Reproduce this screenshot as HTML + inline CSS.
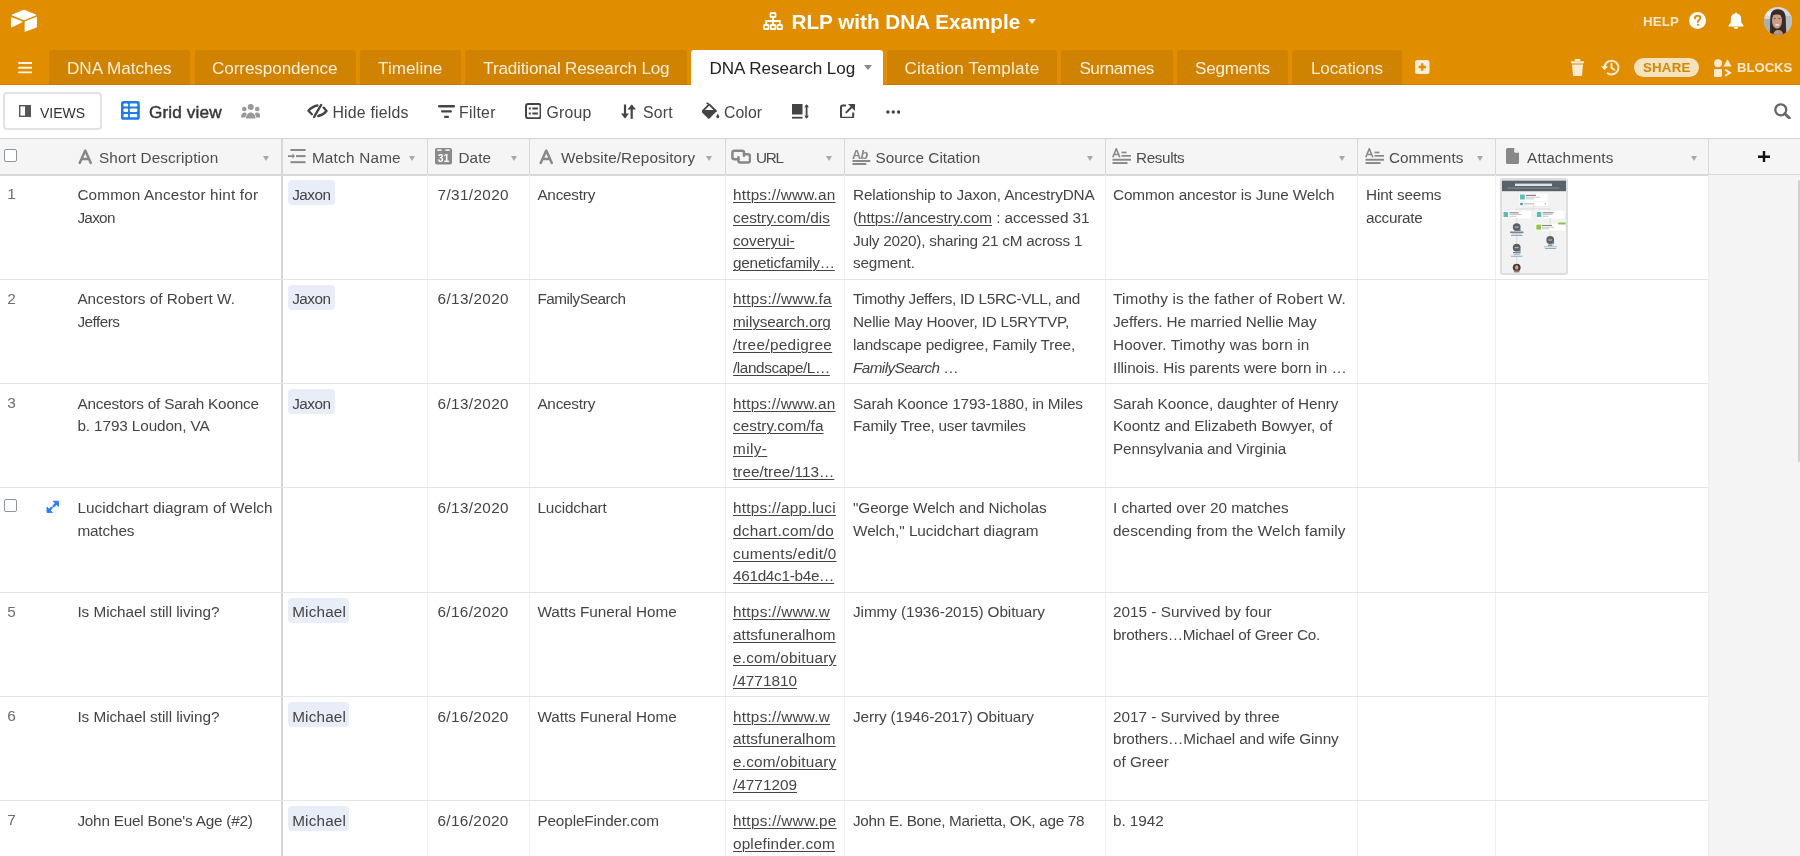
<!DOCTYPE html><html><head><meta charset="utf-8"><style>
*{box-sizing:border-box}
html,body{margin:0;padding:0}
#root{position:absolute;left:0;top:0;width:1800px;height:856px;will-change:transform}
body{width:1800px;height:856px;overflow:hidden;position:relative;font-family:"Liberation Sans",sans-serif;background:#fff;color:#333}
.a{position:absolute}
.c{position:absolute;font-size:15.30px;line-height:22.85px;white-space:nowrap;color:#444}
.c u{text-decoration:underline;text-underline-offset:1.5px;text-decoration-thickness:1px}
.url{text-decoration:underline;text-underline-offset:1.5px;text-decoration-thickness:1px}
.tab{position:absolute;top:49.5px;height:35.5px;background:rgba(0,0,0,0.07);border-radius:3px 3px 0 0;color:rgba(255,255,255,0.86);font-size:17.1px;line-height:37px;white-space:nowrap;text-indent:0}
.tb{position:absolute;font-size:15.8px;line-height:20px;color:#444;white-space:nowrap}
.hd{position:absolute;top:148px;font-size:15.3px;line-height:20px;color:#444;white-space:nowrap}
.caret{position:absolute;top:155.6px;width:0;height:0;border-left:3.85px solid transparent;border-right:3.85px solid transparent;border-top:5.1px solid #a8a8a8}
.vl{position:absolute;top:175px;width:1px;height:681px;background:#efefef}
.vh{position:absolute;top:138px;width:1px;height:37px;background:#d5dadd}
.hl{position:absolute;left:0;width:1708px;height:1px;background:#e3e6e8}
.pill{position:absolute;height:25px;background:#e8edf8;border-radius:4px;font-size:15.3px;line-height:25px;color:#333;padding:0 4.5px;white-space:nowrap}
.num{position:absolute;font-size:15.4px;line-height:20px;color:#6e6e6e}
</style></head><body><div id="root">
<div class="a" style="left:0;top:0;width:1800px;height:85px;background:#e08d00"></div><div class="a" style="left:0;top:84px;width:1800px;height:1px;background:#d98000"></div>
<svg style="position:absolute;left:11px;top:10px" width="26" height="22" viewBox="0 0 26 22"><path d="M11.5 0.3 L1.2 4.4 C0.6 4.6 0.6 5.4 1.2 5.6 L11.6 9.7 C12.5 10.1 13.5 10.1 14.4 9.7 L24.8 5.6 C25.4 5.4 25.4 4.6 24.8 4.4 L14.5 0.3 C13.5 -0.1 12.5 -0.1 11.5 0.3Z" fill="#fff"/><path d="M13.6 11.9 V21.3 C13.6 21.7 14 22 14.4 21.8 L25.4 17.5 C25.7 17.4 25.9 17.1 25.9 16.8 V7.4 C25.9 7 25.5 6.7 25.1 6.9 L14.1 11.2 C13.8 11.3 13.6 11.6 13.6 11.9Z" fill="#fff"/><path d="M11 12.4 L7.8 14 L0.9 17.3 C0.5 17.5 0 17.2 0 16.8 V7.6 C0 7.3 0.4 7 0.8 7.2 L10.9 11.2 C11.3 11.4 11.4 12.2 11 12.4Z" fill="#fff"/></svg>
<svg class="a" style="left:763px;top:12px" width="20" height="18" viewBox="0 0 20 18"><g fill="none" stroke="#fff" stroke-width="1.8"><rect x="7.5" y="1" width="5" height="4" rx="0.6"/><rect x="1" y="13" width="4.5" height="4" rx="0.6"/><rect x="7.7" y="13" width="4.6" height="4" rx="0.6"/><rect x="14.5" y="13" width="4.5" height="4" rx="0.6"/><path d="M10 5v8M3.2 13V9h13.6v4"/></g></svg>
<div class="a" style="left:791.5px;top:8px;font-size:20.7px;line-height:28px;font-weight:bold;color:#fff;white-space:nowrap">RLP with DNA Example</div>
<div class="a" style="left:1027.5px;top:19px;width:0;height:0;border-left:4px solid transparent;border-right:4px solid transparent;border-top:5.5px solid rgba(255,255,255,0.85)"></div>
<div class="a" style="left:1643px;top:12px;font-size:13.3px;line-height:20px;font-weight:bold;letter-spacing:0.1px;color:rgba(255,255,255,0.8)">HELP</div>
<svg class="a" style="left:1689px;top:12px" width="17" height="17" viewBox="0 0 17 17"><circle cx="8.5" cy="8.5" r="8.5" fill="#fff"/><path d="M5.9 6.4c0-1.6 1.2-2.6 2.7-2.6 1.6 0 2.7 1 2.7 2.3 0 1.9-2.4 2-2.4 3.9" fill="none" stroke="#e08d00" stroke-width="1.9" stroke-linecap="round"/><circle cx="8.9" cy="12.8" r="1.1" fill="#e08d00"/></svg>
<svg class="a" style="left:1728px;top:12px" width="16" height="17" viewBox="0 0 16 17"><path d="M8 0.5c0.7 0 1 0.4 1 0.9 2.7 0.5 4.2 2.6 4.2 5.4v3.6l2.3 3.1v0.9H0.5v-0.9l2.3-3.1V6.8C2.8 4 4.3 1.9 7 1.4 7 0.9 7.3 0.5 8 0.5z" fill="#fff"/><path d="M5.8 15h4.4c0 1-1 1.8-2.2 1.8S5.8 16 5.8 15z" fill="#fff"/></svg>
<svg class="a" style="left:1764.2px;top:6.8px" width="28" height="28" viewBox="0 0 28 28"><defs><clipPath id="av"><circle cx="14" cy="14" r="14"/></clipPath></defs><g clip-path="url(#av)"><rect width="28" height="28" fill="#d3d9de"/><rect x="0" y="12" width="8" height="16" fill="#a9b0b5"/><rect x="21" y="9" width="7" height="19" fill="#b8bec2"/><rect x="1" y="4" width="6" height="5" fill="#e8ecef"/>
<path d="M5.8 28 L6.3 11 C6.6 4.5 9.5 2.3 13.8 2.3 C18.5 2.3 21.3 5 21.7 10.5 L22.3 28 Z" fill="#3a2b24"/><ellipse cx="13" cy="13.8" rx="5" ry="7.8" fill="#c99f8a"/><path d="M8 8.5 C9 5.5 11 4.8 13.5 4.8 C16.5 4.8 18 6.5 18.3 9 C16 7.2 11 7 8 8.5Z" fill="#3a2b24"/>
<ellipse cx="10.8" cy="11.6" rx="1.1" ry="0.6" fill="#6b4f44"/><ellipse cx="15.4" cy="11.6" rx="1.1" ry="0.6" fill="#6b4f44"/><ellipse cx="13.1" cy="17.8" rx="2.1" ry="0.9" fill="#eee3dd"/><path d="M9 28 C10 24 12 23 14 23 C16.5 23 18.5 24 19.5 28Z" fill="#b9968a"/></g></svg>
<svg class="a" style="left:17.5px;top:61.7px" width="14.5" height="12" viewBox="0 0 14.5 12"><g stroke="#fff" stroke-width="1.9" stroke-linecap="round" opacity="0.9"><path d="M1 1h12.5M1 5.7h12.5M1 10.4h12.5"/></g></svg>
<div class="tab" style="left:48.5px;width:141.5px"></div>
<div class="a" style="left:67.00px;top:49.5px;letter-spacing:0.000px;white-space:nowrap;font-size:17.1px;line-height:37px;color:rgba(255,255,255,0.86)">DNA Matches</div>
<div class="tab" style="left:194.5px;width:161.0px"></div>
<div class="a" style="left:212.00px;top:49.5px;letter-spacing:-0.077px;white-space:nowrap;font-size:17.1px;line-height:37px;color:rgba(255,255,255,0.86)">Correspondence</div>
<div class="tab" style="left:360px;width:100.7px"></div>
<div class="a" style="left:378.10px;top:49.5px;letter-spacing:0.029px;white-space:nowrap;font-size:17.1px;line-height:37px;color:rgba(255,255,255,0.86)">Timeline</div>
<div class="tab" style="left:465px;width:222.0px"></div>
<div class="a" style="left:483.25px;top:49.5px;letter-spacing:-0.174px;white-space:nowrap;font-size:17.1px;line-height:37px;color:rgba(255,255,255,0.86)">Traditional Research Log</div>
<div class="tab" style="left:887px;width:169.8px"></div>
<div class="a" style="left:904.40px;top:49.5px;letter-spacing:0.188px;white-space:nowrap;font-size:17.1px;line-height:37px;color:rgba(255,255,255,0.86)">Citation Template</div>
<div class="tab" style="left:1060.7px;width:112.3px"></div>
<div class="a" style="left:1079.40px;top:49.5px;letter-spacing:-0.429px;white-space:nowrap;font-size:17.1px;line-height:37px;color:rgba(255,255,255,0.86)">Surnames</div>
<div class="tab" style="left:1176.7px;width:111.7px"></div>
<div class="a" style="left:1195.00px;top:49.5px;letter-spacing:-0.257px;white-space:nowrap;font-size:17.1px;line-height:37px;color:rgba(255,255,255,0.86)">Segments</div>
<div class="tab" style="left:1292.4px;width:109.6px"></div>
<div class="a" style="left:1311.00px;top:49.5px;letter-spacing:-0.150px;white-space:nowrap;font-size:17.1px;line-height:37px;color:rgba(255,255,255,0.86)">Locations</div>
<div class="tab" style="left:691px;width:192px;background:#fff;color:#222"></div>
<div class="a" style="left:709.50px;top:49.5px;letter-spacing:-0.033px;white-space:nowrap;font-size:17.1px;line-height:37px;color:#222">DNA Research Log</div>
<div class="a" style="left:864px;top:64.5px;width:0;height:0;border-left:4px solid transparent;border-right:4px solid transparent;border-top:5px solid #888"></div>
<svg class="a" style="left:1415px;top:60px" width="14.5" height="14" viewBox="0 0 14.5 14"><rect width="14.5" height="14" rx="2.5" fill="rgba(255,255,255,0.85)"/><path d="M7.25 3.3v7.4M3.55 7h7.4" stroke="#e08d00" stroke-width="2.3"/></svg>
<svg class="a" style="left:1570.7px;top:58.8px" width="13" height="17" viewBox="0 0 13 17"><g fill="rgba(255,255,255,0.82)"><rect x="3.5" y="0" width="6" height="2" rx="0.8"/><rect x="0" y="2.2" width="13" height="2.2" rx="0.8"/><path d="M1 5.5h11l-0.9 10.2c-0.1 0.8-0.6 1.3-1.4 1.3H3.3c-0.8 0-1.3-0.5-1.4-1.3z"/></g></svg>
<svg class="a" style="left:1600.5px;top:58.8px" width="19" height="17" viewBox="0 0 19 17"><g fill="none" stroke="rgba(255,255,255,0.82)" stroke-width="2"><path d="M3.6 8.5A6.9 6.9 0 1 1 6 13.8"/><path d="M10.5 4.8v4l2.8 2" stroke-linecap="round"/></g><path d="M0 7.2h7.2L3.6 11.3z" fill="rgba(255,255,255,0.82)"/></svg>
<div class="a" style="left:1633.8px;top:57.9px;width:65.5px;height:19px;border-radius:10px;background:rgba(255,255,255,0.75);color:#d48700;font-size:13.3px;font-weight:bold;line-height:19px;text-align:center;letter-spacing:0.25px;padding-left:0.5px">SHARE</div>
<svg class="a" style="left:1714.4px;top:58.8px" width="18" height="18" viewBox="0 0 18 18"><g fill="rgba(255,255,255,0.82)"><circle cx="4" cy="4.2" r="4"/><path d="M13.5 0.3L17.6 7.6H9.4z"/><rect x="0" y="10" width="8" height="8" rx="1.2"/></g><path d="M11 10.7l5 3.1-5 3.1" fill="none" stroke="rgba(255,255,255,0.82)" stroke-width="2"/></svg>
<div class="a" style="left:1737px;top:58.2px;font-size:13.1px;line-height:20px;font-weight:bold;letter-spacing:0px;color:rgba(255,255,255,0.82)">BLOCKS</div>
<div class="a" style="left:3px;top:92.2px;width:99px;height:37.6px;border:2px solid #e3e3e3;border-radius:4px;background:#fff"></div>
<svg class="a" style="left:19px;top:105px" width="12" height="12" viewBox="0 0 12 12"><rect x="0.7" y="0.7" width="10.6" height="10.6" fill="none" stroke="#555" stroke-width="1.4"/><rect x="6" y="0.7" width="5.3" height="10.6" fill="#555"/></svg>
<div class="tb" style="left:40px;top:102.5px;font-size:14px;letter-spacing:0px;color:#333">VIEWS</div>
<svg class="a" style="left:121.25px;top:101.4px" width="18.8" height="18.8" viewBox="0 0 18.8 18.8"><rect x="0" y="0" width="18.8" height="18.8" rx="2.6" fill="#1f7be6"/><g fill="#fff"><rect x="2.5" y="2.5" width="4.6" height="3.1" rx="0.9"/><rect x="8.8" y="2.5" width="7.5" height="3.1" rx="0.9"/><rect x="2.5" y="7.6" width="4.6" height="3.4" rx="0.9"/><rect x="8.8" y="7.6" width="7.5" height="3.4" rx="0.9"/><rect x="2.5" y="13" width="4.6" height="3.3" rx="0.9"/><rect x="8.8" y="13" width="7.5" height="3.3" rx="0.9"/></g></svg>
<div class="a" style="left:149.00px;top:101.5px;letter-spacing:0.125px;white-space:nowrap;font-size:17.2px;line-height:20px;color:#383838;-webkit-text-stroke:0.45px #383838">Grid view</div>
<svg class="a" style="left:240.8px;top:103.8px" width="19.5" height="15" viewBox="0 0 19.5 15"><g fill="#999"><circle cx="9.75" cy="3" r="3"/><circle cx="3.3" cy="5" r="2.3"/><circle cx="16.2" cy="5" r="2.3"/><path d="M5 14.5c0-3.6 2-6 4.75-6s4.75 2.4 4.75 6z"/><path d="M0 13.5c0-2.8 1.3-5 3.3-5 1 0 1.8 0.5 2.4 1.3C5 10.8 4.5 12 4.4 13.5z"/><path d="M19.5 13.5c0-2.8-1.3-5-3.3-5-1 0-1.8 0.5-2.4 1.3 0.7 1 1.2 2.2 1.3 3.7z"/></g></svg>
<svg class="a" style="left:306px;top:103px" width="23" height="16" viewBox="0 0 23 16"><g fill="none" stroke="#444" stroke-width="2.3" stroke-linecap="round" stroke-linejoin="round"><path d="M11.4 2.5Q6.2 3.4 2.4 7.8L5.9 11.3"/><path d="M15.2 1.9L8.1 13.9"/><path d="M17.6 4.6L20.6 8Q17.4 12 12.2 13"/></g></svg>
<div class="a" style="left:332.40px;top:103px;letter-spacing:0.180px;white-space:nowrap;font-size:15.9px;line-height:20px;color:#444">Hide fields</div>
<svg class="a" style="left:437.5px;top:104.7px" width="17" height="13.5" viewBox="0 0 17 13.5"><g fill="#444"><rect x="0" y="0" width="17" height="2.4" rx="1.2"/><rect x="3" y="5.3" width="11" height="2.3" rx="1.1"/><rect x="6" y="10.8" width="5" height="2.4" rx="1.2"/></g></svg>
<div class="a" style="left:459.10px;top:103px;letter-spacing:0.240px;white-space:nowrap;font-size:15.8px;line-height:20px;color:#444">Filter</div>
<svg class="a" style="left:524.7px;top:103px" width="16.6" height="16.3" viewBox="0 0 16.6 16.3"><rect x="1" y="1" width="14.6" height="14.3" rx="2.2" fill="none" stroke="#444" stroke-width="2"/><g fill="#444"><rect x="3.8" y="4.5" width="2" height="2"/><rect x="7.3" y="4.5" width="5.6" height="2"/><rect x="3.8" y="9.5" width="2" height="2"/><rect x="7.3" y="9.5" width="5.6" height="2"/></g></svg>
<div class="a" style="left:546.50px;top:103px;letter-spacing:0.250px;white-space:nowrap;font-size:15.8px;line-height:20px;color:#444">Group</div>
<svg class="a" style="left:621.3px;top:103.5px" width="14.5" height="15" viewBox="0 0 14.5 15"><g fill="none" stroke="#444" stroke-width="2.2"><path d="M4 0.5v13"/><path d="M10.7 1.5v13.3"/></g><g fill="#444"><path d="M0 9.5h8l-4 5z"/><path d="M6.5 5.5h8.5l-4.25-5z"/></g></svg>
<div class="a" style="left:642.90px;top:103px;letter-spacing:0.267px;white-space:nowrap;font-size:15.8px;line-height:20px;color:#444">Sort</div>
<svg class="a" style="left:701px;top:102px" width="18.5" height="17" viewBox="0 0 18.5 17"><path d="M8.2 2.4L1.3 9.3c-0.4 0.4-0.4 1 0 1.4l5.8 5.8c0.4 0.4 1 0.4 1.4 0l6.9-6.9z" fill="#444"/><path d="M8.2 2.4l7.2 7.2" stroke="#444" stroke-width="1.4"/><path d="M2.6 8h11.2L8.2 2.4z" fill="#fff"/><path d="M8.2 2.4L1.3 9.3M8.2 2.4l7.2 7.2" stroke="#444" stroke-width="1.8" fill="none"/><path d="M5.5 0.8l3 1.8" stroke="#444" stroke-width="1.5"/><path d="M16.8 11.8c0.9 1.3 1.5 2.2 1.5 3 0 0.8-0.7 1.4-1.5 1.4s-1.5-0.6-1.5-1.4c0-0.8 0.6-1.7 1.5-3z" fill="#444"/></svg>
<div class="a" style="left:723.90px;top:103px;letter-spacing:0.100px;white-space:nowrap;font-size:15.8px;line-height:20px;color:#444">Color</div>
<svg class="a" style="left:791.7px;top:103.7px" width="17.5" height="15" viewBox="0 0 17.5 15"><rect x="0" y="0" width="10.5" height="10.5" fill="#444"/><rect x="0" y="12.8" width="10.5" height="1.8" fill="#444"/><path d="M14.6 1.2v12.6" stroke="#444" stroke-width="1.8"/><path d="M12.2 3.3l2.4-3 2.4 3zM12.2 11.7l2.4 3 2.4-3z" fill="#444"/></svg>
<svg class="a" style="left:840.4px;top:103.7px" width="15" height="14.5" viewBox="0 0 15 14.5"><path d="M6 1.6H2.6C1.6 1.6 1 2.2 1 3.2v9c0 1 0.6 1.6 1.6 1.6h9c1 0 1.6-0.6 1.6-1.6V8.6" fill="none" stroke="#444" stroke-width="2"/><path d="M5.8 8.9L12.5 2.2" stroke="#444" stroke-width="2"/><path d="M8 0h7v7z" fill="#444"/></svg>
<svg class="a" style="left:885.6px;top:110px" width="14.5" height="4" viewBox="0 0 14.5 4"><g fill="#444"><circle cx="1.9" cy="2" r="1.7"/><circle cx="7.25" cy="2" r="1.7"/><circle cx="12.6" cy="2" r="1.7"/></g></svg>
<svg class="a" style="left:1774px;top:102.8px" width="17" height="16.5" viewBox="0 0 17 16.5"><circle cx="6.8" cy="6.8" r="5.5" fill="none" stroke="#666" stroke-width="2.3"/><path d="M10.8 10.8l4.6 4.3" stroke="#666" stroke-width="2.8" stroke-linecap="round"/></svg>
<div class="a" style="left:0;top:137.6px;width:1800px;height:38.2px;background:#f5f5f5;border-top:1.6px solid #d2d2d2;border-bottom:2px solid #d9d9d9"></div>
<div class="a" style="left:1708px;top:175px;width:92px;height:681px;background:#f4f4f4"></div>
<div class="a" style="left:1797.5px;top:180px;width:2.5px;height:282px;background:#cfcfcf;border-radius:2px"></div>
<div class="a" style="left:4px;top:149px;width:13px;height:13px;border:1.3px solid #8c959c;border-radius:2px;background:#fff"></div>
<div class="vl" style="left:426.5px"></div><div class="vh" style="left:426.5px"></div>
<div class="vl" style="left:529.0px"></div><div class="vh" style="left:529.0px"></div>
<div class="vl" style="left:724.5px"></div><div class="vh" style="left:724.5px"></div>
<div class="vl" style="left:844.0px"></div><div class="vh" style="left:844.0px"></div>
<div class="vl" style="left:1105.0px"></div><div class="vh" style="left:1105.0px"></div>
<div class="vl" style="left:1357.0px"></div><div class="vh" style="left:1357.0px"></div>
<div class="vl" style="left:1495.0px"></div><div class="vh" style="left:1495.0px"></div>
<div class="vl" style="left:1707.5px"></div><div class="vh" style="left:1707.5px"></div>
<div class="a" style="left:281px;top:138px;width:2px;height:718px;background:#d6d6d6"></div>
<div class="hl" style="top:278.83px"></div>
<div class="hl" style="top:383.16px"></div>
<div class="hl" style="top:487.49px"></div>
<div class="hl" style="top:591.82px"></div>
<div class="hl" style="top:696.15px"></div>
<div class="hl" style="top:800.48px"></div>
<div class="hl" style="top:904.81px"></div>
<svg class="a" style="left:78.2px;top:149px" width="14.5" height="15.5" viewBox="0 0 14.5 15.5"><path d="M1.7 13.9L7.25 1.6L12.8 13.9M4 9.9h6.5" fill="none" stroke="#888" stroke-width="2.5" stroke-linecap="round" stroke-linejoin="round"/></svg>
<div class="a" style="left:99.00px;top:148px;letter-spacing:0.113px;white-space:nowrap;font-size:15.3px;line-height:20px;color:#4d4d4d">Short Description</div>
<div class="caret" style="left:263px"></div>
<svg class="a" style="left:288.4px;top:149.4px" width="17.6" height="14.2" viewBox="0 0 17.6 14.2"><g fill="#888"><rect x="2.5" y="0" width="15.1" height="2"/><rect x="8" y="6.1" width="9.6" height="2"/><rect x="2.5" y="12.2" width="15.1" height="2"/><path d="M0 6.3h4.5V4.5l2.5 2.6-2.5 2.6V7.9H0z"/></g></svg>
<div class="a" style="left:311.90px;top:148px;letter-spacing:0.222px;white-space:nowrap;font-size:15.3px;line-height:20px;color:#4d4d4d">Match Name</div>
<div class="caret" style="left:409px"></div>
<svg class="a" style="left:435.3px;top:148.3px" width="17" height="16.6" viewBox="0 0 17 16.6"><rect x="0" y="0" width="17" height="16.6" rx="1.8" fill="#8a8a8a"/><rect x="2.3" y="1.3" width="4.3" height="1.6" fill="#f4f4f4"/><rect x="10.4" y="1.3" width="4.3" height="1.6" fill="#f4f4f4"/><text x="8.5" y="14.2" font-family="Liberation Sans" font-weight="bold" font-size="10.5" fill="#fff" text-anchor="middle">31</text></svg>
<div class="a" style="left:458.50px;top:148px;letter-spacing:0.067px;white-space:nowrap;font-size:15.3px;line-height:20px;color:#4d4d4d">Date</div>
<div class="caret" style="left:510.5px"></div>
<svg class="a" style="left:538.5px;top:149px" width="14.5" height="15.5" viewBox="0 0 14.5 15.5"><path d="M1.7 13.9L7.25 1.6L12.8 13.9M4 9.9h6.5" fill="none" stroke="#888" stroke-width="2.5" stroke-linecap="round" stroke-linejoin="round"/></svg>
<div class="a" style="left:561.10px;top:148px;letter-spacing:0.094px;white-space:nowrap;font-size:15.3px;line-height:20px;color:#4d4d4d">Website/Repository</div>
<div class="caret" style="left:706px"></div>
<svg class="a" style="left:730.5px;top:149px" width="20" height="14.5" viewBox="0 0 20 14.5"><g fill="none" stroke="#888" stroke-width="2.5" stroke-linecap="round" stroke-linejoin="round"><path d="M7.6 10.3H3.4Q1.4 10.3 1.4 8.3V3.8Q1.4 1.8 3.4 1.8H11Q13 1.8 13 3.8V6.8"/><path d="M13 5.3H17Q19 5.3 19 7.3V11.4Q19 13.4 17 13.4H9.4Q7.4 13.4 7.4 11.4V8.2"/></g></svg>
<div class="a" style="left:755.90px;top:148px;letter-spacing:-1.200px;white-space:nowrap;font-size:15.3px;line-height:20px;color:#4d4d4d">URL</div>
<div class="caret" style="left:826px"></div>
<svg class="a" style="left:851.5px;top:147.5px" width="19" height="17" viewBox="0 0 19 17"><text x="0" y="10.6" font-family="Liberation Sans" font-weight="bold" font-size="12.6" fill="#888">A</text><text x="8.6" y="10.6" font-family="Liberation Sans" font-weight="bold" font-style="italic" font-size="12.6" fill="#888">b</text><rect x="0.3" y="12" width="18.2" height="1.9" rx="0.9" fill="#888"/><rect x="0.3" y="15" width="14.2" height="1.9" rx="0.9" fill="#888"/></svg>
<div class="a" style="left:875.50px;top:148px;letter-spacing:0.014px;white-space:nowrap;font-size:15.3px;line-height:20px;color:#4d4d4d">Source Citation</div>
<div class="caret" style="left:1087px"></div>
<svg class="a" style="left:1112.4px;top:147.8px" width="19" height="16" viewBox="0 0 19 16"><path d="M0.8 9.2L4.3 0.8L7.8 9.2M2 6.5h4.6" fill="none" stroke="#888" stroke-width="1.6"/><g fill="#888"><rect x="9.5" y="3.6" width="5" height="1.7"/><rect x="9.5" y="7" width="9.5" height="1.7"/><rect x="0.5" y="10.8" width="18.5" height="1.9"/><rect x="0.5" y="14.1" width="15" height="1.9"/></g></svg>
<div class="a" style="left:1136.10px;top:148px;letter-spacing:-0.400px;white-space:nowrap;font-size:15.3px;line-height:20px;color:#4d4d4d">Results</div>
<div class="caret" style="left:1339.3px"></div>
<svg class="a" style="left:1364.8px;top:147.8px" width="19" height="16" viewBox="0 0 19 16"><path d="M0.8 9.2L4.3 0.8L7.8 9.2M2 6.5h4.6" fill="none" stroke="#888" stroke-width="1.6"/><g fill="#888"><rect x="9.5" y="3.6" width="5" height="1.7"/><rect x="9.5" y="7" width="9.5" height="1.7"/><rect x="0.5" y="10.8" width="18.5" height="1.9"/><rect x="0.5" y="14.1" width="15" height="1.9"/></g></svg>
<div class="a" style="left:1388.90px;top:148px;letter-spacing:0.086px;white-space:nowrap;font-size:15.3px;line-height:20px;color:#4d4d4d">Comments</div>
<div class="caret" style="left:1476.5px"></div>
<svg class="a" style="left:1505.8px;top:148.2px" width="13" height="16.3" viewBox="0 0 13 16.3"><path d="M1.8 0h6.4L13 4.8v9.7c0 1-0.8 1.8-1.8 1.8H1.8C0.8 16.3 0 15.5 0 14.5V1.8C0 0.8 0.8 0 1.8 0z" fill="#888"/><path d="M8.2 0v3.6c0 0.7 0.5 1.2 1.2 1.2H13" fill="#f4f4f4"/></svg>
<div class="a" style="left:1527.10px;top:148px;letter-spacing:0.120px;white-space:nowrap;font-size:15.3px;line-height:20px;color:#4d4d4d">Attachments</div>
<div class="caret" style="left:1690.5px"></div>
<svg class="a" style="left:1758px;top:150.9px" width="12" height="11.5" viewBox="0 0 12 11.5"><path d="M6 0v11.5M0 5.75h12" stroke="#111" stroke-width="2.4"/></svg>
<div class="num" style="left:7.2px;top:184.40px">1</div>
<div class="c" style="left:77.4px;top:183.90px;letter-spacing:0.165px;">Common Ancestor hint for</div><div class="c" style="left:77.4px;top:206.75px;letter-spacing:-0.700px;">Jaxon</div>
<div class="pill" style="left:287.5px;top:180.20px;width:47.0px"></div>
<div class="c" style="left:292.2px;top:183.90px;letter-spacing:-0.500px;">Jaxon</div>
<div class="c" style="left:437.5px;top:183.90px;letter-spacing:0.375px;">7/31/2020</div>
<div class="c" style="left:537.4px;top:183.90px;letter-spacing:-0.229px;">Ancestry</div>
<div class="c" style="left:733px;top:183.90px;letter-spacing:0.215px;text-decoration:underline;text-underline-offset:1.5px;text-decoration-thickness:1px">https://www.an</div><div class="c" style="left:733px;top:206.75px;letter-spacing:0.015px;text-decoration:underline;text-underline-offset:1.5px;text-decoration-thickness:1px">cestry.com/dis</div><div class="c" style="left:733px;top:229.60px;letter-spacing:-0.050px;text-decoration:underline;text-underline-offset:1.5px;text-decoration-thickness:1px">coveryui-</div><div class="c" style="left:733px;top:252.45px;letter-spacing:-0.200px;text-decoration:underline;text-underline-offset:1.5px;text-decoration-thickness:1px">geneticfamily…</div>
<div class="c" style="left:853px;top:183.90px;letter-spacing:-0.121px;">Relationship to Jaxon, AncestryDNA</div><div class="c" style="left:853px;top:206.75px;letter-spacing:-0.088px;">(<u>https://ancestry.com</u> : accessed 31</div><div class="c" style="left:853px;top:229.60px;letter-spacing:-0.236px;">July 2020), sharing 21 cM across 1</div><div class="c" style="left:853px;top:252.45px;letter-spacing:-0.143px;">segment.</div>
<div class="c" style="left:1113px;top:183.90px;letter-spacing:-0.093px;">Common ancestor is June Welch</div>
<div class="c" style="left:1366px;top:183.90px;letter-spacing:-0.111px;">Hint seems</div><div class="c" style="left:1366px;top:206.75px;letter-spacing:-0.286px;">accurate</div>
<div class="a" style="left:1500px;top:178.40px;width:68px;height:96.4px;border:2px solid #dedede;border-radius:3px;background:#f2f2f2;overflow:hidden">
<svg width="64" height="92.4" viewBox="0 0 64 92.4" style="display:block"><rect x="0" y="0.6" width="64" height="10.6" fill="#5b6168"/><rect x="13" y="3.6" width="37" height="2.4" fill="#dfe1e3"/><rect x="5.4" y="7.6" width="52" height="1" fill="#8a9097"/>
<rect x="17.3" y="13.7" width="28.3" height="7.7" fill="#fff"/><rect x="18" y="14.5" width="4.8" height="5" fill="#5cbdb5"/><rect x="24" y="14.8" width="10" height="1.1" fill="#777"/><rect x="24" y="16.8" width="14" height="0.8" fill="#bbb"/><rect x="24" y="18.5" width="8" height="0.8" fill="#bbb"/>
<rect x="17.3" y="22.2" width="28.3" height="3.5" fill="#fff"/><circle cx="19.5" cy="24" r="1.3" fill="#2e86c1"/><rect x="22" y="23.5" width="10" height="0.8" fill="#999"/><path d="M42.5 23.4l0.8 1 0.8-1z" fill="#666"/>
<path d="M14.3 30.8V28.9H47.8V30.8M31.5 25.7v3.2" stroke="#ccc" stroke-width="0.6" fill="none"/>
<rect x="0.85" y="30.8" width="28" height="7.7" fill="#fff"/><rect x="1.5" y="32" width="4.5" height="5" fill="#5cbdb5"/><rect x="7.5" y="32.3" width="9" height="1" fill="#777"/><rect x="7.5" y="34.2" width="12" height="0.8" fill="#bbb"/><rect x="7.5" y="35.8" width="7" height="0.8" fill="#bbb"/>
<rect x="34" y="30.8" width="28.5" height="7.7" fill="#fff"/><rect x="34.8" y="32" width="4.5" height="5" fill="#5cbdb5"/><rect x="40.5" y="32.3" width="11" height="1" fill="#777"/><rect x="40.5" y="34.2" width="10" height="0.8" fill="#bbb"/><rect x="40.5" y="35.8" width="6" height="0.8" fill="#bbb"/>
<path d="M14.7 38.5v4.6M48.2 38.5v5.2M48.2 50.7v5.3M14.7 56v7.7M14.7 77v6" stroke="#ccc" stroke-width="0.6"/>
<rect x="33.6" y="43.7" width="29.6" height="7" fill="#fff"/><rect x="34.4" y="44.6" width="4.5" height="5" fill="#8cc63f"/><rect x="40" y="44.9" width="10" height="1" fill="#777"/><rect x="40" y="46.8" width="12" height="0.8" fill="#bbb"/><rect x="40" y="48.4" width="7" height="0.8" fill="#bbb"/><rect x="56" y="42.4" width="7.8" height="2" rx="1" fill="#8cc63f"/>
<circle cx="14.7" cy="47.1" r="3.9" fill="#5b6168"/><rect x="12.8" y="46.6" width="3.8" height="1" fill="#c8ccd0"/><rect x="16.8" y="49.2" width="1.8" height="1.8" fill="#2e86c1"/><rect x="8" y="51.6" width="13.5" height="1.2" fill="#666"/><rect x="9.5" y="53.5" width="10.5" height="0.8" fill="#aaa"/><rect x="9" y="55.2" width="11.5" height="0.8" fill="#5aa0d0"/>
<circle cx="48.2" cy="60" r="3.9" fill="#5b6168"/><rect x="46.3" y="59.5" width="3.8" height="1" fill="#c8ccd0"/><rect x="50.3" y="62" width="1.8" height="1.8" fill="#2e86c1"/><rect x="46" y="64.6" width="4.5" height="1.1" fill="#666"/><rect x="42" y="66.4" width="13" height="0.8" fill="#aaa"/><rect x="43" y="68" width="11" height="0.8" fill="#5aa0d0"/>
<circle cx="14.7" cy="67.7" r="3.9" fill="#5b6168"/><rect x="12.8" y="67.2" width="3.8" height="1" fill="#c8ccd0"/><rect x="16.8" y="69.8" width="1.8" height="1.8" fill="#2e86c1"/><rect x="11" y="72.2" width="7.5" height="1.1" fill="#666"/><rect x="12" y="74" width="5.5" height="0.8" fill="#aaa"/><rect x="9" y="75.8" width="11.5" height="0.8" fill="#5aa0d0"/>
<circle cx="14.7" cy="87.6" r="3.9" fill="#4a3a33"/><ellipse cx="14.7" cy="87.4" rx="1.7" ry="2.2" fill="#c9a290"/><rect x="12" y="90.4" width="5.4" height="2" fill="#8f7b72"/></svg></div>
<div class="num" style="left:7.2px;top:288.73px">2</div>
<div class="c" style="left:77.4px;top:288.23px;letter-spacing:0.010px;">Ancestors of Robert W.</div><div class="c" style="left:77.4px;top:311.08px;letter-spacing:-0.500px;">Jeffers</div>
<div class="pill" style="left:287.5px;top:284.53px;width:47.0px"></div>
<div class="c" style="left:292.2px;top:288.23px;letter-spacing:-0.500px;">Jaxon</div>
<div class="c" style="left:437.5px;top:288.23px;letter-spacing:0.375px;">6/13/2020</div>
<div class="c" style="left:537.4px;top:288.23px;letter-spacing:-0.455px;">FamilySearch</div>
<div class="c" style="left:733px;top:288.23px;letter-spacing:0.262px;text-decoration:underline;text-underline-offset:1.5px;text-decoration-thickness:1px">https://www.fa</div><div class="c" style="left:733px;top:311.08px;letter-spacing:-0.123px;text-decoration:underline;text-underline-offset:1.5px;text-decoration-thickness:1px">milysearch.org</div><div class="c" style="left:733px;top:333.93px;letter-spacing:0.338px;text-decoration:underline;text-underline-offset:1.5px;text-decoration-thickness:1px">/tree/pedigree</div><div class="c" style="left:733px;top:356.78px;letter-spacing:-0.400px;text-decoration:underline;text-underline-offset:1.5px;text-decoration-thickness:1px">/landscape/L…</div>
<div class="c" style="left:853px;top:288.23px;letter-spacing:-0.312px;">Timothy Jeffers, ID L5RC-VLL, and</div><div class="c" style="left:853px;top:311.08px;letter-spacing:-0.207px;">Nellie May Hoover, ID L5RYTVP,</div><div class="c" style="left:853px;top:333.93px;letter-spacing:-0.129px;">landscape pedigree, Family Tree,</div><div class="c" style="left:853px;top:356.78px;letter-spacing:-0.585px;"><i>FamilySearch</i> …</div>
<div class="c" style="left:1113px;top:288.23px;letter-spacing:0.164px;">Timothy is the father of Robert W.</div><div class="c" style="left:1113px;top:311.08px;letter-spacing:-0.062px;">Jeffers. He married Nellie May</div><div class="c" style="left:1113px;top:333.93px;letter-spacing:0.123px;">Hoover. Timothy was born in</div><div class="c" style="left:1113px;top:356.78px;letter-spacing:-0.074px;">Illinois. His parents were born in …</div>
<div class="num" style="left:7.2px;top:393.06px">3</div>
<div class="c" style="left:77.4px;top:392.56px;letter-spacing:-0.192px;">Ancestors of Sarah Koonce</div><div class="c" style="left:77.4px;top:415.41px;letter-spacing:-0.106px;">b. 1793 Loudon, VA</div>
<div class="pill" style="left:287.5px;top:388.86px;width:47.0px"></div>
<div class="c" style="left:292.2px;top:392.56px;letter-spacing:-0.500px;">Jaxon</div>
<div class="c" style="left:437.5px;top:392.56px;letter-spacing:0.375px;">6/13/2020</div>
<div class="c" style="left:537.4px;top:392.56px;letter-spacing:-0.229px;">Ancestry</div>
<div class="c" style="left:733px;top:392.56px;letter-spacing:0.215px;text-decoration:underline;text-underline-offset:1.5px;text-decoration-thickness:1px">https://www.an</div><div class="c" style="left:733px;top:415.41px;letter-spacing:0.050px;text-decoration:underline;text-underline-offset:1.5px;text-decoration-thickness:1px">cestry.com/fa</div><div class="c" style="left:733px;top:438.26px;letter-spacing:0.400px;text-decoration:underline;text-underline-offset:1.5px;text-decoration-thickness:1px">mily-</div><div class="c" style="left:733px;top:461.11px;letter-spacing:0.031px;text-decoration:underline;text-underline-offset:1.5px;text-decoration-thickness:1px">tree/tree/113…</div>
<div class="c" style="left:853px;top:392.56px;letter-spacing:-0.155px;">Sarah Koonce 1793-1880, in Miles</div><div class="c" style="left:853px;top:415.41px;letter-spacing:-0.224px;">Family Tree, user tavmiles</div>
<div class="c" style="left:1113px;top:392.56px;letter-spacing:-0.080px;">Sarah Koonce, daughter of Henry</div><div class="c" style="left:1113px;top:415.41px;letter-spacing:-0.033px;">Koontz and Elizabeth Bowyer, of</div><div class="c" style="left:1113px;top:438.26px;letter-spacing:-0.100px;">Pennsylvania and Virginia</div>
<div class="a" style="left:4.2px;top:498.99px;width:12.6px;height:13px;border:1.4px solid #8c959c;border-radius:2px;background:#fff"></div>
<svg class="a" style="left:46px;top:500.29px" width="13.5" height="13.5" viewBox="0 0 13.5 13.5"><g fill="#2d7ff9"><path d="M7.2 1.2h5.3v5.3z" stroke="#2d7ff9" stroke-width="0.9" stroke-linejoin="round"/><path d="M1 7.1v5.4h5.4z" stroke="#2d7ff9" stroke-width="0.9" stroke-linejoin="round"/></g><g stroke="#2d7ff9" stroke-width="2.3" stroke-linecap="round"><path d="M10.6 3.1L7.6 6.1"/><path d="M5.6 7.8L3 10.4"/></g></svg>
<div class="c" style="left:77.4px;top:496.89px;letter-spacing:0.062px;">Lucidchart diagram of Welch</div><div class="c" style="left:77.4px;top:519.74px;letter-spacing:-0.133px;">matches</div>
<div class="c" style="left:437.5px;top:496.89px;letter-spacing:0.375px;">6/13/2020</div>
<div class="c" style="left:537.4px;top:496.89px;letter-spacing:-0.133px;">Lucidchart</div>
<div class="c" style="left:733px;top:496.89px;letter-spacing:0.267px;text-decoration:underline;text-underline-offset:1.5px;text-decoration-thickness:1px">https://app.luci</div><div class="c" style="left:733px;top:519.74px;letter-spacing:0.317px;text-decoration:underline;text-underline-offset:1.5px;text-decoration-thickness:1px">dchart.com/do</div><div class="c" style="left:733px;top:542.59px;letter-spacing:0.292px;text-decoration:underline;text-underline-offset:1.5px;text-decoration-thickness:1px">cuments/edit/0</div><div class="c" style="left:733px;top:565.44px;letter-spacing:-0.291px;text-decoration:underline;text-underline-offset:1.5px;text-decoration-thickness:1px">461d4c1-b4e…</div>
<div class="c" style="left:853px;top:496.89px;letter-spacing:-0.080px;">"George Welch and Nicholas</div><div class="c" style="left:853px;top:519.74px;letter-spacing:-0.032px;">Welch," Lucidchart diagram</div>
<div class="c" style="left:1113px;top:496.89px;letter-spacing:-0.050px;">I charted over 20 matches</div><div class="c" style="left:1113px;top:519.74px;letter-spacing:0.097px;">descending from the Welch family</div>
<div class="num" style="left:7.2px;top:601.72px">5</div>
<div class="c" style="left:77.4px;top:601.22px;letter-spacing:-0.035px;">Is Michael still living?</div>
<div class="pill" style="left:287.5px;top:597.52px;width:61.5px"></div>
<div class="c" style="left:292.2px;top:601.22px;letter-spacing:0.167px;">Michael</div>
<div class="c" style="left:437.5px;top:601.22px;letter-spacing:0.350px;">6/16/2020</div>
<div class="c" style="left:537.4px;top:601.22px;letter-spacing:-0.024px;">Watts Funeral Home</div>
<div class="c" style="left:733px;top:601.22px;letter-spacing:0.283px;text-decoration:underline;text-underline-offset:1.5px;text-decoration-thickness:1px">https://www.w</div><div class="c" style="left:733px;top:624.07px;letter-spacing:0.108px;text-decoration:underline;text-underline-offset:1.5px;text-decoration-thickness:1px">attsfuneralhom</div><div class="c" style="left:733px;top:646.92px;letter-spacing:0.215px;text-decoration:underline;text-underline-offset:1.5px;text-decoration-thickness:1px">e.com/obituary</div><div class="c" style="left:733px;top:669.77px;letter-spacing:0.029px;text-decoration:underline;text-underline-offset:1.5px;text-decoration-thickness:1px">/4771810</div>
<div class="c" style="left:853px;top:601.22px;letter-spacing:-0.080px;">Jimmy (1936-2015) Obituary</div>
<div class="c" style="left:1113px;top:601.22px;letter-spacing:0.018px;">2015 - Survived by four</div><div class="c" style="left:1113px;top:624.07px;letter-spacing:-0.186px;">brothers…Michael of Greer Co.</div>
<div class="num" style="left:7.2px;top:706.05px">6</div>
<div class="c" style="left:77.4px;top:705.55px;letter-spacing:-0.035px;">Is Michael still living?</div>
<div class="pill" style="left:287.5px;top:701.85px;width:61.5px"></div>
<div class="c" style="left:292.2px;top:705.55px;letter-spacing:0.167px;">Michael</div>
<div class="c" style="left:437.5px;top:705.55px;letter-spacing:0.350px;">6/16/2020</div>
<div class="c" style="left:537.4px;top:705.55px;letter-spacing:-0.024px;">Watts Funeral Home</div>
<div class="c" style="left:733px;top:705.55px;letter-spacing:0.283px;text-decoration:underline;text-underline-offset:1.5px;text-decoration-thickness:1px">https://www.w</div><div class="c" style="left:733px;top:728.40px;letter-spacing:0.108px;text-decoration:underline;text-underline-offset:1.5px;text-decoration-thickness:1px">attsfuneralhom</div><div class="c" style="left:733px;top:751.25px;letter-spacing:0.215px;text-decoration:underline;text-underline-offset:1.5px;text-decoration-thickness:1px">e.com/obituary</div><div class="c" style="left:733px;top:774.10px;letter-spacing:0.029px;text-decoration:underline;text-underline-offset:1.5px;text-decoration-thickness:1px">/4771209</div>
<div class="c" style="left:853px;top:705.55px;letter-spacing:-0.112px;">Jerry (1946-2017) Obituary</div>
<div class="c" style="left:1113px;top:705.55px;letter-spacing:0.000px;">2017 - Survived by three</div><div class="c" style="left:1113px;top:728.40px;letter-spacing:-0.127px;">brothers…Michael and wife Ginny</div><div class="c" style="left:1113px;top:751.25px;letter-spacing:-0.029px;">of Greer</div>
<div class="num" style="left:7.2px;top:810.38px">7</div>
<div class="c" style="left:77.4px;top:809.88px;letter-spacing:-0.217px;">John Euel Bone's Age (#2)</div>
<div class="pill" style="left:287.5px;top:806.18px;width:61.5px"></div>
<div class="c" style="left:292.2px;top:809.88px;letter-spacing:0.167px;">Michael</div>
<div class="c" style="left:437.5px;top:809.88px;letter-spacing:0.350px;">6/16/2020</div>
<div class="c" style="left:537.4px;top:809.88px;letter-spacing:-0.120px;">PeopleFinder.com</div>
<div class="c" style="left:733px;top:809.88px;letter-spacing:0.292px;text-decoration:underline;text-underline-offset:1.5px;text-decoration-thickness:1px">https://www.pe</div><div class="c" style="left:733px;top:832.73px;letter-spacing:0.169px;text-decoration:underline;text-underline-offset:1.5px;text-decoration-thickness:1px">oplefinder.com</div>
<div class="c" style="left:853px;top:809.88px;letter-spacing:-0.303px;">John E. Bone, Marietta, OK, age 78</div>
<div class="c" style="left:1113px;top:809.88px;letter-spacing:-0.067px;">b. 1942</div>
</div></body></html>
